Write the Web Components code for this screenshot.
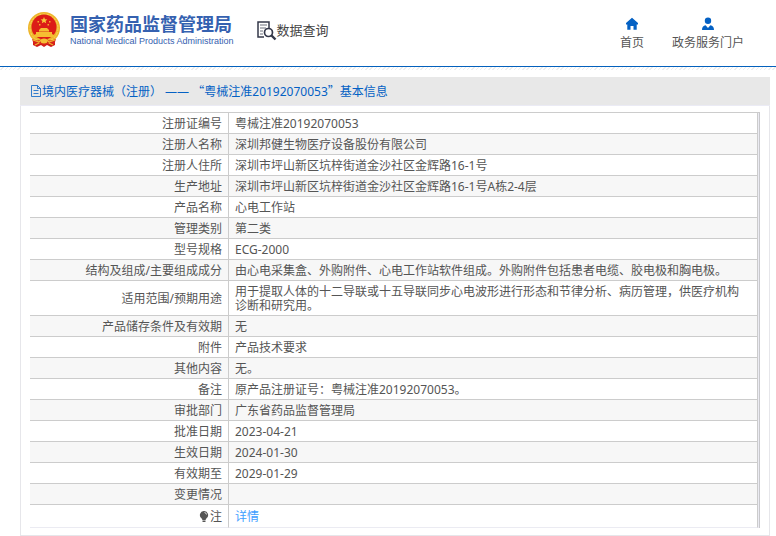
<!DOCTYPE html>
<html lang="zh-CN">
<head>
<meta charset="utf-8">
<meta name="viewport" content="width=device-width, initial-scale=1">
<title>数据查询</title>
<style>
  body {
    margin: 0;
    background: #fff;
    color: #555;
    font: 12px/14px "Noto Sans", "Noto Sans CJK SC", sans-serif;
  }
    .quote {
      font-family: "Noto Sans CJK SC", sans-serif;
    }
</style>
</head>
<body>
<nmpa-header>
  <nmpa-nav-link slot="nav" href="#home" icon="home">首页</nmpa-nav-link>
  <nmpa-nav-link slot="nav" href="#portal" icon="user">政务服务门户</nmpa-nav-link>
</nmpa-header>
<nmpa-panel>
  <span slot="title">境内医疗器械（注册） —— <span class="quote">“</span>粤械注准20192070053<span class="quote">”</span>基本信息</span>
  <nmpa-record></nmpa-record>
</nmpa-panel>

<script>
const headerTemplate = document.createElement('template');
headerTemplate.innerHTML = `
  <style>
    :host {
      display: block;
    }
    header {
      display: flex;
      align-items: center;
      height: 66px;
      padding: 0 32px 0 27px;
      border-bottom: 1px solid #0461bd;
    }
      .brand {
        display: flex;
        align-items: center;
        gap: 9px;
        margin-bottom: 6px;
        color: #3561b0;
        text-decoration: none;
      }
        .brand span {
          display: block;
          white-space: nowrap;
        }
        .brand .name {
          padding-top: 2px;
          font: bold 18px/20px "Noto Sans CJK SC", sans-serif;
        }
        .brand .english {
          font: 9px/16px "Liberation Sans", sans-serif;
        }
      .section {
        display: flex;
        align-items: center;
        margin: 0 0 6px 22px;
        color: #444;
        font: 13px/20px "Noto Sans CJK SC", sans-serif;
        white-space: nowrap;
      }
      nav {
        display: flex;
        gap: 28px;
        margin-left: auto;
        padding-top: 2px;
      }
    .hatch {
      height: 3px;
      background: repeating-linear-gradient(135deg, #fff 0 2px, #eee 2px 3px);
    }
  </style>
  <header>
    <a class="brand" href="#top">
      <svg width="34" height="36" viewBox="0 0 34 36" aria-hidden="true">
        <path d="M6 25L6 33L10 35L14 33L17 35L20 33L24 35L28 33L28 25Z" fill="#cf1b18"/>
        <circle cx="17" cy="16" r="16" fill="#eeb52c"/>
        <circle cx="17" cy="16" r="14" fill="none" stroke="#f8d658" stroke-width="1" stroke-dasharray="3 1"/>
        <circle cx="17" cy="15" r="12.500" fill="#dc1c17"/>
        <path d="M17 5l1 2.200 2.400.2-1.800 1.600.6 2.300-2.200-1.300-2.200 1.300.6-2.300-1.800-1.600 2.400-.2z" fill="#f7c83a"/>
        <path d="M10.500 9h1.500v1.500h-1.500zM22 9h1.500v1.500h-1.500zM12 12h1.500v1.500h-1.500zM20.500 12h1.500v1.500h-1.500z" fill="#f2a92b"/>
        <path d="M12 18l2-2h6l2 2v2h3v2l2 1v2H7v-2l2-1v-2h3z" fill="#f6bd32"/>
        <path d="M12 19.500h10" stroke="#d63a18" stroke-width=".5"/>
        <path d="M5 27q7 3 9 0h6q2 3 9 0l-2 6-5-2-5 3-5-3-5 2z" fill="#d8231a"/>
        <path d="M6 28l6 2 2-2h6l2 2 6-2M8 33l4-2M26 33l-4-2" fill="none" stroke="#f1b42d" stroke-width="1.200"/>
        <ellipse cx="17" cy="29" rx="3.500" ry="2.500" fill="#f4bf35"/>
      </svg>
      <span>
        <span class="name">国家药品监督管理局</span>
        <span class="english">National Medical Products Administration</span>
      </span>
    </a>
    <div class="section">
      <svg width="21" height="21" viewBox="0 0 21 21" fill="none" stroke="#34384a" aria-hidden="true">
        <path d="M13 8V2H2v15h6" stroke-width="1.500"/>
        <path d="M4 5h7M4 8h6M4 11h3M4 14h3" stroke="#6d707c"/>
        <circle cx="12.500" cy="12.500" r="4" stroke-width="1.700"/>
        <path d="M15.500 15.500l4 4" stroke-width="2.400"/>
      </svg>
      <span>数据查询</span>
    </div>
    <nav><slot name="nav"></slot></nav>
  </header>
  <div class="hatch"></div>
`;

class NmpaHeader extends HTMLElement {
  constructor() {
    super();
    this.attachShadow({ mode: 'open' });
    this.shadowRoot.appendChild(headerTemplate.content.cloneNode(true));
  }
}

const icons = {
  home: '<path d="M7 .8L1 6V7.500H2.300V12.700H5.500V9h3v3.700h3.200V7.500H13V6z"/>',
  user: '<circle cx="7" cy="3.700" r="3.200"/><path d="M1 13c0-3 1.300-4.500 3.600-4.800L7 11l2.400-2.800C11.700 8.500 13 10 13 13z"/>'
};

class NmpaNavLink extends HTMLElement {
  constructor() {
    super();
    this.attachShadow({ mode: 'open' });
  }

  connectedCallback() {
    this.shadowRoot.innerHTML = `
      <style>
        :host {
          display: block;
        }
        a {
          display: flex;
          flex-direction: column;
          align-items: center;
          gap: 4px;
          color: #555;
          line-height: 16px;
          text-decoration: none;
          white-space: nowrap;
        }
        svg {
          fill: #0461c4;
        }
      </style>
      <a href="${this.getAttribute('href')}">
        <svg width="14" height="14" viewBox="0 0 14 14" aria-hidden="true">${icons[this.getAttribute('icon')]}</svg>
        <slot></slot>
      </a>
    `;
  }
}

const panelTemplate = document.createElement('template');
panelTemplate.innerHTML = `
  <style>
    :host {
      display: block;
      margin: 7px 6px 0 20px;
      border: 1px solid #e6e6ea;
      border-top: 0;
    }
    h1 {
      display: flex;
      align-items: center;
      margin: 0 -1px;
      padding: 0 11px;
      background: #e8e8e8;
      border-bottom: 1px solid #ebebf5;
      color: #0461c4;
      font-size: 12px;
      font-weight: normal;
      line-height: 27px;
    }
    .body {
      padding: 7px 9px;
    }
  </style>
  <h1>
    <svg width="11" height="12" viewBox="0 0 11 12" fill="none" stroke="#0461c4" aria-hidden="true">
      <path d="M.5.500H6.500L9.500 3.500V11.500H.5ZM6.500.500V3.500H9.500M2.500 5.500H7.500M2.500 8.500H7.500" stroke-width=".8"/>
    </svg>
    <slot name="title"></slot>
  </h1>
  <div class="body"><slot></slot></div>
`;

class NmpaPanel extends HTMLElement {
  constructor() {
    super();
    this.attachShadow({ mode: 'open' });
    this.shadowRoot.appendChild(panelTemplate.content.cloneNode(true));
  }
}

const rows = [
  ['注册证编号', '粤械注准20192070053'],
  ['注册人名称', '深圳邦健生物医疗设备股份有限公司'],
  ['注册人住所', '深圳市坪山新区坑梓街道金沙社区金辉路16-1号'],
  ['生产地址', '深圳市坪山新区坑梓街道金沙社区金辉路16-1号A栋2-4层'],
  ['产品名称', '心电工作站'],
  ['管理类别', '第二类'],
  ['型号规格', 'ECG-2000'],
  ['结构及组成/主要组成成分', '由心电采集盒、外购附件、心电工作站软件组成。外购附件包括患者电缆、胶电极和胸电极。'],
  ['适用范围/预期用途', '用于提取人体的十二导联或十五导联同步心电波形进行形态和节律分析、病历管理，供医疗机构诊断和研究用。'],
  ['产品储存条件及有效期', '无'],
  ['附件', '产品技术要求'],
  ['其他内容', '无。'],
  ['备注', '原产品注册证号：粤械注准20192070053。'],
  ['审批部门', '广东省药品监督管理局'],
  ['批准日期', '2023-04-21'],
  ['生效日期', '2024-01-30'],
  ['有效期至', '2029-01-29'],
  ['变更情况', '']
];

class NmpaRecord extends HTMLElement {
  constructor() {
    super();
    this.attachShadow({ mode: 'open' });
    this.shadowRoot.innerHTML = `
      <style>
        :host {
          display: block;
          margin-top: -1px;
          padding-right: 1px;
          background: #ebebf2;
          border-top: 1px solid #ccc;
          border-right: 1px solid #c8c8cc;
        }
        table {
          width: 100%;
          border-spacing: 0;
          background: #fff;
        }
          tr:nth-child(even) {
            background: #f7f7f7;
          }
            th, td {
              height: 14px;
              padding: 4px 6px 2px;
              border-right: 1px solid #ccc;
              border-bottom: 1px solid #ccc;
              text-align: left;
              font-weight: normal;
            }
            th {
              width: 186px;
              text-align: right;
            }
            td {
              padding-right: 12px;
            }
          tr:last-child > * {
            padding-top: 5px;
            padding-bottom: 3px;
            border-bottom-color: #ebebf2;
          }
        a {
          color: #409eff;
          text-decoration: none;
        }
        svg {
          vertical-align: -1px;
        }
      </style>
      <table>
        <tbody>
          ${rows.map(([label, value]) => `<tr><th scope="row">${label}</th><td>${value}</td></tr>`).join('')}
          <tr>
            <th scope="row"><svg width="11" height="11" viewBox="0 0 11 11" aria-hidden="true">
              <path d="M5 0a4 4 0 0 1 2.500 7.200L6.500 9h-3L2.500 7.200A4 4 0 0 1 5 0zM3.500 9.500h3V11h-3z" fill="#555"/>
              <path d="M5.500 1.500q1.800.2 2 2" fill="none" stroke="#fff" stroke-width=".8"/>
            </svg>注</th>
            <td><a href="#detail">详情</a></td>
          </tr>
        </tbody>
      </table>
    `;
  }
}

window.customElements.define('nmpa-header', NmpaHeader);
window.customElements.define('nmpa-nav-link', NmpaNavLink);
window.customElements.define('nmpa-panel', NmpaPanel);
window.customElements.define('nmpa-record', NmpaRecord);
</script>
</body>
</html>
